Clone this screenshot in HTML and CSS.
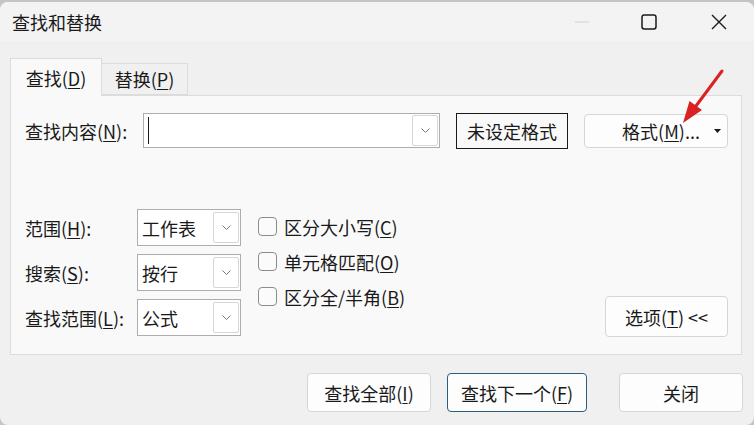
FILE: index.html
```html
<!DOCTYPE html>
<html lang="zh-CN">
<head>
<meta charset="utf-8">
<title>查找和替换</title>
<link rel="stylesheet" href="styles.css">
</head>
<body>
<div class="screen">
  <div class="window">
    <div class="titlebar">
      <div class="title">查找和替换</div>
      <div class="controls">
        <span class="ctl ctl-min"><svg width="14" height="2" viewBox="0 0 14 2"><line x1="0" y1="1" x2="14" y2="1" stroke="#d2d2d2" stroke-width="1.2"/></svg></span>
        <span class="ctl"><svg width="16" height="16" viewBox="0 0 16 16"><rect x="1" y="1" width="14" height="14" rx="2.2" fill="none" stroke="#1a1a1a" stroke-width="1.5"/></svg></span>
        <span class="ctl"><svg width="16" height="16" viewBox="0 0 16 16"><path d="M1 1 L15 15 M15 1 L1 15" stroke="#1a1a1a" stroke-width="1.4" fill="none"/></svg></span>
      </div>
    </div>

    <div class="tabs">
      <div class="tab tab-active">查找(<u>D</u>)</div>
      <div class="tab tab-idle">替换(<u>P</u>)</div>
    </div>

    <div class="panel">
      <div class="row-find">
        <div class="lbl lbl-find">查找内容(<u>N</u>):</div>
        <div class="combo combo-find">
          <span class="caret"></span>
          <span class="dd"><svg width="9" height="5" viewBox="0 0 9 5"><path d="M0.5 0.5 L4.5 4.5 L8.5 0.5" fill="none" stroke="#777" stroke-width="1"/></svg></span>
        </div>
        <div class="fmt-preview">未设定格式</div>
        <div class="btn fmt-btn">
          <span class="fmt-text">格式(<u>M</u>)...</span>
          <svg class="tri" width="7" height="4" viewBox="0 0 7 4"><path d="M0 0 L7 0 L3.5 4 Z" fill="#1a1a1a"/></svg>
        </div>
      </div>

      <div class="lower">
        <div class="opts-grid">
          <div class="lbl">范围(<u>H</u>):</div>
          <div class="combo sel"><span class="sel-text">工作表</span><span class="dd"><svg width="9" height="5" viewBox="0 0 9 5"><path d="M0.5 0.5 L4.5 4.5 L8.5 0.5" fill="none" stroke="#777" stroke-width="1"/></svg></span></div>
          <div class="lbl">搜索(<u>S</u>):</div>
          <div class="combo sel"><span class="sel-text">按行</span><span class="dd"><svg width="9" height="5" viewBox="0 0 9 5"><path d="M0.5 0.5 L4.5 4.5 L8.5 0.5" fill="none" stroke="#777" stroke-width="1"/></svg></span></div>
          <div class="lbl">查找范围(<u>L</u>):</div>
          <div class="combo sel"><span class="sel-text">公式</span><span class="dd"><svg width="9" height="5" viewBox="0 0 9 5"><path d="M0.5 0.5 L4.5 4.5 L8.5 0.5" fill="none" stroke="#777" stroke-width="1"/></svg></span></div>
        </div>

        <div class="checks">
          <div class="check"><span class="box"></span><span>区分大小写(<u>C</u>)</span></div>
          <div class="check"><span class="box"></span><span>单元格匹配(<u>O</u>)</span></div>
          <div class="check"><span class="box"></span><span>区分全/半角(<u>B</u>)</span></div>
        </div>

        <div class="btn options-btn">选项(<u>T</u>) &lt;&lt;</div>
      </div>
    </div>

    <div class="footer">
      <div class="btn foot-btn">查找全部(<u>I</u>)</div>
      <div class="btn foot-btn btn-default">查找下一个(<u>F</u>)</div>
      <div class="btn foot-btn btn-close">关闭</div>
    </div>
  </div>

  <svg class="arrow" width="754" height="425" viewBox="0 0 754 425">
    <line x1="722" y1="71" x2="693" y2="110" stroke="#d92222" stroke-width="3" stroke-linecap="round"/>
    <path d="M683 123 L689.5 101 L702 110 Z" fill="#d92222"/>
  </svg>
</div>
</body>
</html>
```

FILE: styles.css
```css
* {
  box-sizing: border-box;
}

html, body {
  margin: 0;
  padding: 0;
}

body {
  font-family: "Noto Sans CJK SC", "Noto Sans", sans-serif;
  font-size: 18px;
  color: #1a1a1a;
  background: #c4c4c4;
}

u {
  text-decoration: underline;
  text-underline-offset: 2px;
  text-decoration-thickness: 1px;
}

.screen {
  position: relative;
  width: 754px;
  height: 425px;
  padding-top: 2px;
  overflow: hidden;
}

.window {
  height: 423px;
  background: #f0f0f0;
  border-radius: 8px;
  display: flex;
  flex-direction: column;
  overflow: hidden;
}

.titlebar {
  height: 39px;
  display: flex;
  align-items: center;
  padding-left: 12px;
  background: #f3f3f3;
}

.title {
  line-height: 18px;
  font-size: 18px;
}

.controls {
  margin-left: auto;
  display: flex;
  height: 100%;
}

.ctl {
  width: 70px;
  display: flex;
  align-items: center;
  justify-content: center;
}

.ctl-min {
  padding-left: 6px;
}

.tabs {
  margin-top: 17px;
  padding-left: 10px;
  display: flex;
  align-items: flex-end;
  position: relative;
  z-index: 2;
  margin-bottom: -1px;
}

.tab {
  display: flex;
  align-items: center;
  justify-content: center;
  line-height: 18px;
}

.tab-active {
  width: 92px;
  height: 38px;
  background: #f9f9f9;
  border: 1px solid #dcdcdc;
  border-bottom: none;
}

.tab-idle {
  width: 86px;
  height: 32px;
  background: #f0f0f0;
  border: 1px solid #dcdcdc;
  border-left: none;
  margin-bottom: 1px;
}

.panel {
  margin: 0 12px 0 10px;
  height: 260px;
  background: #f9f9f9;
  border: 1px solid #dcdcdc;
  padding: 17px 13px 16px 14px;
  display: flex;
  flex-direction: column;
}

.row-find {
  display: flex;
  align-items: center;
  height: 35px;
}

.lbl {
  line-height: 18px;
  display: flex;
  align-items: center;
}

.lbl-find {
  width: 118px;
  flex: none;
}

.combo {
  background: #ffffff;
  border: 1px solid #adadad;
  display: flex;
  align-items: center;
  position: relative;
}

.combo-find {
  width: 297px;
  height: 35px;
  flex: none;
}

.caret {
  width: 1px;
  height: 27px;
  background: #1a1a1a;
  margin-left: 4px;
}

.dd {
  margin-left: auto;
  width: 26px;
  align-self: stretch;
  margin-top: 1px;
  margin-bottom: 1px;
  margin-right: 1px;
  border: 1px solid #d6d6d6;
  border-radius: 2px;
  display: flex;
  align-items: center;
  justify-content: center;
  background: #ffffff;
}

.fmt-preview {
  margin-left: 16px;
  width: 112px;
  height: 36px;
  border: 1px solid #1a1a1a;
  display: flex;
  align-items: center;
  justify-content: center;
  line-height: 18px;
  background: #f9f9f9;
}

.btn {
  background: #fdfdfd;
  border: 1px solid #d6d6d6;
  border-radius: 4px;
  display: flex;
  align-items: center;
  justify-content: center;
  line-height: 18px;
}

.fmt-btn {
  margin-left: 16px;
  width: 144px;
  height: 34px;
  position: relative;
}

.fmt-text {
  margin-left: 10px;
}

.fmt-btn .tri {
  position: absolute;
  right: 6px;
  top: 14px;
}

.lower {
  margin-top: 61px;
  display: flex;
  align-items: flex-start;
}

.opts-grid {
  display: grid;
  grid-template-columns: 112px 104px;
  grid-auto-rows: 37px;
  row-gap: 8px;
}

.sel {
  height: 37px;
}

.sel-text {
  padding-left: 4px;
  line-height: 18px;
}

.sel .dd {
  margin-top: 2px;
  margin-bottom: 2px;
}

.checks {
  margin-left: 17px;
  display: flex;
  flex-direction: column;
}

.check {
  height: 35px;
  display: flex;
  align-items: center;
  gap: 7px;
  line-height: 18px;
}

.box {
  width: 19px;
  height: 19px;
  border: 1px solid #8c8c8c;
  border-radius: 4px;
  background: #fbfbfb;
}

.options-btn {
  margin-left: auto;
  align-self: flex-end;
  width: 123px;
  height: 41px;
  margin-bottom: -1px;
}

.footer {
  padding-top: 18px;
  padding-right: 11px;
  display: flex;
  justify-content: flex-end;
}

.foot-btn {
  width: 124px;
  height: 39px;
}

.btn-default {
  width: 140px;
  margin-left: 16px;
  border-color: #2a5d7e;
}

.btn-close {
  margin-left: 32px;
}

.arrow {
  position: absolute;
  left: 0;
  top: 0;
  pointer-events: none;
}
```
